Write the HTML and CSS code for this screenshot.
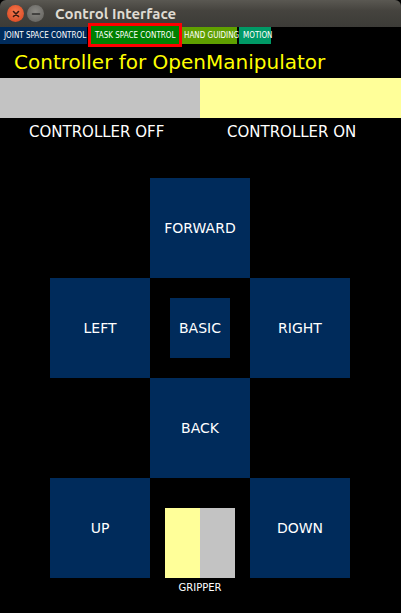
FILE: index.html
```html
<!DOCTYPE html>
<html>
<head>
<meta charset="utf-8">
<link rel="stylesheet" href="styles.css">
</head>
<body>
<div class="window">
  <div class="titlebar">
    <span class="btn btn-close">
      <svg width="16" height="16" viewBox="0 0 16 16"><path d="M5.5 5.5 L10.5 10.5 M10.5 5.5 L5.5 10.5" stroke="#3a1a10" stroke-width="1.6" stroke-linecap="round"/></svg>
    </span>
    <span class="btn btn-min">
      <svg width="16" height="16" viewBox="0 0 16 16"><path d="M4.5 8 H11.5" stroke="#2e2e2c" stroke-width="1.6" stroke-linecap="round"/></svg>
    </span>
    <span class="title">Control Interface</span>
  </div>
  <div class="tabs">
    <span class="tab tab-joint">JOINT SPACE CONTROL</span>
    <span class="tab tab-task">TASK SPACE CONTROL</span>
    <span class="tab tab-hand">HAND GUIDING</span>
    <span class="tab tab-motion">MOTION</span>
  </div>
  <h1 class="heading">Controller for OpenManipulator</h1>
  <div class="switch">
    <div class="sw sw-off"></div>
    <div class="sw sw-on"></div>
  </div>
  <div class="switch-labels">
    <span class="lbl lbl-off">CONTROLLER OFF</span>
    <span class="lbl lbl-on">CONTROLLER ON</span>
  </div>
  <div class="pad">
    <div class="key k-forward">FORWARD</div>
    <div class="key k-left">LEFT</div>
    <div class="cell-basic"><div class="key k-basic">BASIC</div></div>
    <div class="key k-right">RIGHT</div>
    <div class="key k-back">BACK</div>
    <div class="key k-up">UP</div>
    <div class="gripper-cell">
      <div class="gripper">
        <div class="g g-open"></div>
        <div class="g g-close"></div>
      </div>
      <div class="g-label">GRIPPER</div>
    </div>
    <div class="key k-down">DOWN</div>
  </div>
</div>
</body>
</html>
```

FILE: styles.css
```css
html, body {
  margin: 0;
  padding: 0;
  background: #000;
}
.window {
  width: 401px;
  height: 613px;
  background: #000;
  font-family: "DejaVu Sans", sans-serif;
  color: #fff;
  overflow: hidden;
}
.titlebar {
  height: 27px;
  background: linear-gradient(#5a5852, #45433e 40%, #3c3b37);
  border-radius: 6px 6px 0 0;
  display: flex;
  align-items: center;
  padding-left: 7px;
  gap: 3px;
}
.btn {
  width: 17px;
  height: 17px;
  border-radius: 50%;
  display: flex;
  align-items: center;
  justify-content: center;
}
.btn svg { width: 16px; height: 16px; }
.btn-close {
  background: radial-gradient(circle at 50% 40%, #f5794f, #e0522a 70%, #b83f1c);
}
.btn-min {
  background: radial-gradient(circle at 50% 40%, #8a8984, #6c6b67 70%, #55544f);
}
.title {
  margin-left: 8px;
  font-family: "Ubuntu", "DejaVu Sans", sans-serif;
  font-weight: bold;
  font-size: 15px;
  color: #dfdbd2;
}
.tabs {
  height: 17px;
  display: flex;
  align-items: stretch;
}
.tab {
  box-sizing: border-box;
  font-family: "DejaVu Sans Condensed", "DejaVu Sans", sans-serif;
  font-size: 8px;
  color: #fff;
  display: flex;
  align-items: center;
  padding: 0 3px;
  white-space: nowrap;
}
.tab-joint {
  background: #002b5b;
  width: 87px;
  padding-left: 4px;
}
.tab-task {
  background: #008000;
  width: 88px;
  margin: -1px 0 -1px 4px;
  height: 18px;
  padding-left: 4px;
  outline: 3px solid #ff0000;
}
.tab-hand {
  background: #5f9f00;
  width: 55px;
  margin-left: 3px;
  padding-left: 2px;
}
.tab-motion {
  background: #009966;
  width: 32px;
  margin-left: 2px;
  padding-left: 4px;
}
.heading {
  margin: 0;
  padding: 6px 0 0 14px;
  height: 28px;
  font-size: 20px;
  font-weight: normal;
  color: #ffff00;
  line-height: 24px;
}
.switch {
  display: flex;
  height: 40px;
}
.sw-off { width: 200px; background: #c3c3c3; }
.sw-on { flex: 1; background: #ffff99; }
.switch-labels {
  display: flex;
  height: 28px;
  align-items: center;
  font-size: 15px;
}
.lbl-off { padding-left: 29px; width: 169px; }
.lbl-on { padding-left: 29px; }
.pad {
  margin: 32px 0 0 50px;
  display: grid;
  grid-template-columns: 100px 100px 100px;
  grid-template-rows: 100px 100px 100px 100px;
}
.key {
  background: #002b5b;
  display: flex;
  align-items: center;
  justify-content: center;
  font-size: 14px;
  color: #fff;
}
.k-forward { grid-column: 2; grid-row: 1; }
.k-left { grid-column: 1; grid-row: 2; }
.cell-basic { grid-column: 2; grid-row: 2; display: flex; align-items: center; justify-content: center; }
.k-basic { width: 60px; height: 60px; }
.k-right { grid-column: 3; grid-row: 2; }
.k-back { grid-column: 2; grid-row: 3; }
.k-up { grid-column: 1; grid-row: 4; }
.k-down { grid-column: 3; grid-row: 4; }
.gripper-cell {
  grid-column: 2;
  grid-row: 4;
  display: flex;
  flex-direction: column;
  align-items: center;
  padding-top: 30px;
}
.gripper { display: flex; height: 70px; flex-shrink: 0; }
.g { width: 35px; }
.g-open { background: #ffff99; }
.g-close { background: #c3c3c3; }
.g-label {
  flex-shrink: 0;
  margin-top: 4px;
  font-size: 10px;
  line-height: 12px;
  color: #fff;
}
```
